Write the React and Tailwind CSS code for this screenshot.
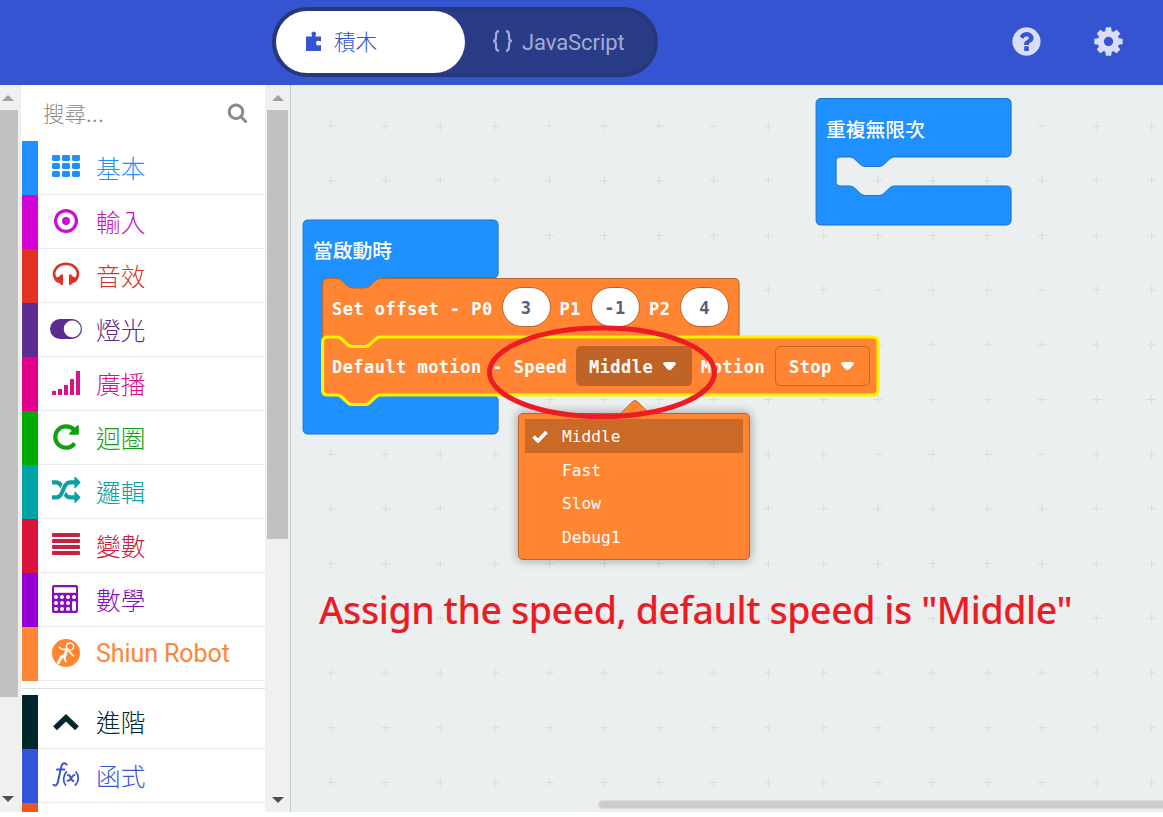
import React from "react";

const FA = {
  help: "M1024 1376v-192q0-14-9-23t-23-9h-192q-14 0-23 9t-9 23v192q0 14 9 23t23 9h192q14 0 23-9t9-23zm256-672q0-88-55.5-163t-138.5-116-170-41q-243 0-371 213-15 24 8 42l132 100q7 6 19 6 16 0 25-12 53-68 86-92 34-24 86-24 48 0 85.5 26t37.5 59q0 38-20 61t-68 45q-63 28-115.5 86.5t-52.5 125.5v36q0 14 9 23t23 9h192q14 0 23-9t9-23q0-19 21.5-49.5t54.5-49.5q32-18 49-28.5t46-35 44.5-48 28-60.5 12.5-81zm384 192q0 209-103 385.5t-279.5 279.5-385.5 103-385.5-103-279.5-279.5-103-385.5 103-385.5 279.5-279.5 385.5-103 385.5 103 279.5 279.5 103 385.5z",
  cog: "M1152 896q0-106-75-181t-181-75-181 75-75 181 75 181 181 75 181-75 75-181zm512-109v222q0 12-8 23t-20 13l-185 28q-19 54-39 91 35 50 107 138 10 12 10 25t-9 23q-27 37-99 108t-94 71q-12 0-26-9l-138-108q-44 23-91 38-16 136-29 186-7 28-36 28h-222q-14 0-24.5-8.5t-11.5-21.5l-28-184q-49-16-90-37l-141 107q-10 9-25 9-14 0-25-11-126-114-165-168-7-10-7-23 0-12 8-23 15-21 51-66.5t54-70.5q-27-50-41-99l-183-27q-13-2-21-12.5t-8-23.5v-222q0-12 8-23t19-13l186-28q14-46 39-92-40-57-107-138-10-12-10-24 0-10 9-23 26-36 98.5-107.5t94.5-71.5q13 0 26 10l138 107q44-23 91-38 16-136 29-186 7-28 36-28h222q14 0 24.5 8.5t11.5 21.5l28 184q49 16 90 37l142-107q9-9 24-9 13 0 25 10 129 119 165 170 7 8 7 22 0 12-8 23-15 21-51 66.5t-54 70.5q26 50 41 98l183 28q13 2 21 12.5t8 23.5z",
  search: "M1216 832q0-185-131.5-316.5t-316.5-131.5-316.5 131.5-131.5 316.5 131.5 316.5 316.5 131.5 316.5-131.5 131.5-316.5zm512 832q0 52-38 90t-90 38q-54 0-90-38l-343-342q-179 124-399 124-143 0-273.5-55.5t-225-150-150-225-55.5-273.5 55.5-273.5 150-225 225-150 273.5-55.5 273.5 55.5 225 150 150 225 55.5 273.5q0 220-124 399l343 343q37 37 37 90z",
  repeat: "M1664 256v448q0 26-19 45t-45 19h-448q-42 0-59-40-17-39 14-69l138-138q-148-137-349-137-104 0-198.5 40.5t-163.5 109.5-109.5 163.5-40.5 198.5 40.5 198.5 109.5 163.5 163.5 109.5 198.5 40.5q119 0 225-52t179-147q7-10 23-12 15 0 25 9l137 138q9 8 9.5 20.5t-7.5 22.5q-109 132-264 204.5t-327 72.5q-156 0-298-61t-245-164-164-245-61-298 61-298 164-245 245-164 298-61q147 0 284.5 55.5t244.5 156.5l130-129q29-31 70-14 39 17 39 59z",
  random: "M666 481q-60 92-137 273-22-45-37-72.5t-40.5-63.5-51-56.5-63-35-81.5-14.5h-224q-14 0-23-9t-9-23v-192q0-14 9-23t23-9h224q250 0 410 225zm1126 799q0 14-9 23l-320 320q-9 9-23 9-13 0-22.5-9.5t-9.5-22.5v-192q-32 0-85 .5t-81 1-73-1-71-5-64-10.500-63-18.500-58-28.500-59-40-55-53.500-56-69.500q59-93 136-273 22 45 37 72.5t40.5 63.5 51 56.5 63 35 81.5 14.5h256v-192q0-14 9-23t23-9q12 0 24 10l319 319q9 9 9 23zm0-896q0 14-9 23l-320 320q-9 9-23 9-13 0-22.5-9.5t-9.5-22.5v-192h-256q-48 0-87 15t-69 45-51 61.5-45 77.5q-32 62-78 171-29 66-49.5 111t-54 105-64 100-74 83-90 68.5-106.5 42-128 16.5h-224q-14 0-23-9t-9-23v-192q0-14 9-23t23-9h224q48 0 87-15t69-45 51-61.5 45-77.5q32-62 78-171 29-66 49.5-111t54-105 64-100 74-83 90-68.5 106.5-42 128-16.5h256v-192q0-14 9-23t23-9q12 0 24 10l319 319q9 9 9 23z",
};

function Glyph({ d, className }) {
  return (
    <svg viewBox="0 0 1792 1792" className={className} fill="currentColor">
      <path d={d} />
    </svg>
  );
}

function Box({ children }) {
  return (
    <svg viewBox="0 0 32 32" className="mt-[2px] h-8 w-8 shrink-0" fill="currentColor">
      {children}
    </svg>
  );
}

const icons = {
  grid: (
    <Box>
      {[2, 10, 18].map((y) =>
        [2, 12, 22].map((x) => <rect key={x + "-" + y} x={x} y={y} width="8" height="6" rx="1.4" />)
      )}
    </Box>
  ),
  target: (
    <Box>
      <circle cx="16" cy="14" r="10.400" fill="none" stroke="currentColor" strokeWidth="3.200" />
      <circle cx="16" cy="14" r="4" />
    </Box>
  ),
  headphones: (
    <Box>
      <path d="M7.500 19.500C0 13 6 2.800 16 2.800S32 13 24.500 19.500" fill="none" stroke="currentColor" strokeWidth="2.700" />
      <path d="M13 13.500V24H10.800L10.300 22.500C7 22 4.500 20 4.200 17.500C6 16.500 9 16.300 10.300 14.500L10.800 13.500ZM19 13.500V24H21.200L21.700 22.500C25 22 27.500 20 27.800 17.500C26 16.500 23 16.300 21.700 14.500L21.200 13.500Z" />
    </Box>
  ),
  toggle: (
    <Box>
      <path fillRule="evenodd" d="M10 4h12a10 10 0 0 1 0 20H10A10 10 0 0 1 10 4ZM22.300 5.500a8.500 8.500 0 1 0 0 17a8.500 8.500 0 1 0 0-17Z" />
    </Box>
  ),
  signal: (
    <Box>
      <path d="M2 22h4v4H2zM8 20h4v6H8zM14 16h4v10h-4zM20 10h4v16h-4zM26 2h4v24h-4z" />
    </Box>
  ),
  repeat: (
    <Box>
      <path transform="translate(1 -1) scale(.01674)" d={FA.repeat} />
    </Box>
  ),
  random: (
    <Box>
      <path transform="translate(2 -1) scale(.0159 .0167)" d={FA.random} />
    </Box>
  ),
  lines: (
    <Box>
      {[2, 8, 14, 20].map((y) => (
        <rect key={y} x="2" y={y} width="28" height="4" rx="1" />
      ))}
    </Box>
  ),
  calc: (
    <Box>
      <rect x="2" y="0" width="26" height="28" rx="2" />
      <rect x="4" y="2.300" width="22" height="5.500" fill="white" />
      {[12, 18, 24].map((y) =>
        [6, 12, 18, 24].map((x) =>
          x === 24 && y > 12 ? null : <circle key={x + "-" + y} cx={x} cy={y} r="2" fill="white" />
        )
      )}
      <rect x="22" y="16" width="4" height="10" rx="1.800" fill="white" />
    </Box>
  ),
  robot: (
    <Box>
      <circle cx="16" cy="14" r="14" />
      <g fill="none" stroke="white" strokeLinecap="round">
        <circle cx="20" cy="7.500" r="3.600" strokeWidth="1.500" />
        <path d="M17 10L15 16L11.500 18L8.500 23.500" strokeWidth="3" />
        <path d="M15.500 16L14.500 20L16 22.500" strokeWidth="1.700" />
        <path d="M15.500 10.500L11.500 10L9.500 8.500" strokeWidth="1.700" />
        <path d="M19 12L22 15.500L23.500 17" strokeWidth="1.700" />
      </g>
    </Box>
  ),
  up: (
    <Box>
      <path d="M5 21.200L16 10.800L27 21.200" fill="none" stroke="currentColor" strokeWidth="5.400" strokeLinejoin="miter" />
    </Box>
  ),
  fx: (
    <Box>
      <g fill="none" stroke="currentColor" strokeLinecap="round">
        <path d="M16.500 3.500C14 1.300 12 2.200 11.200 6L8 20.500C7.200 24.300 5.500 25.300 3.500 23.700M7 8.500H14.500" strokeWidth="2" />
        <path d="M16.500 11C12.800 14.500 12.800 20.500 15.500 24M26 11C29.300 14.500 29 20.500 25.500 24" strokeWidth="1.800" />
        <path d="M18 14.300C20.500 12.500 20.500 20.500 23.500 20M24.500 14C22.500 13.300 20.500 20.800 17.500 19.800" strokeWidth="2" />
      </g>
    </Box>
  ),
};

const CJK = "font-['Roboto','Noto_Sans_CJK_TC',sans-serif]";

function Category({ stripe, color, icon, label, latin }) {
  return (
    <div className="flex h-[54px] shrink-0">
      <div className={"w-4 shrink-0 " + stripe} />
      <div className={"flex flex-1 items-center border-b border-[#ececec] pl-3 " + color}>
        {icons[icon]}
        <span className={latin ? "ml-[14px] mt-[1px] text-[25px] tracking-[-0.080px]" : "ml-[14px] mt-[4px] text-[24.700px] font-light"}>{label}</span>
      </div>
    </div>
  );
}

function Triangle({ up }) {
  return (
    <svg viewBox="0 0 12 6" className={up ? "h-[6px] w-[12px] text-[#a0a0a0]" : "h-[6px] w-[12px] text-[#505050]"} fill="currentColor">
      <path d={up ? "M0 6L6 0L12 6Z" : "M0 0L6 6L12 0Z"} />
    </svg>
  );
}

function Caret() {
  return (
    <svg viewBox="0 0 13 9" className="h-[9px] w-[13px] shrink-0" fill="white">
      <path d="M2 0H11Q14 .4 12.300 2.800L8.500 7.300Q6.500 9.200 4.500 7.300L.7 2.800Q-1 .4 2 0Z" />
    </svg>
  );
}

function Value({ children }) {
  return (
    <div className="flex h-[40px] w-[49px] shrink-0 items-center justify-center rounded-[20px] border border-[#b9642c] bg-white pt-[4px] text-[#575e75]">
      {children}
    </div>
  );
}

const MONO = "font-['DejaVu_Sans_Mono','Noto_Sans_CJK_TC',monospace]";

function Workspace() {
  return (
    <main className="relative min-w-0 flex-1 overflow-hidden bg-[#ebeff0]">
      <svg viewBox="291 85 872 727" className="absolute inset-0 h-[727px] w-[872px]">
        <defs>
          <pattern id="grid" x="303.600" y="98.650" width="54.700" height="54.700" patternUnits="userSpaceOnUse">
            <path d="M23 27.350H31.700M27.350 23V31.700" stroke="#d9dddf" strokeWidth="1" />
          </pattern>
        </defs>
        <rect x="291" y="85" width="872" height="727" fill="url(#grid)" />
        <g transform="translate(-0.400 0)">
          <g fill="#1e90ff" stroke="#1873cc" strokeWidth="1">
            <path d="M821.500 98.500H1006.500Q1011.500 98.500 1011.500 103.500V152Q1011.500 157 1006.500 157H895Q892 157 890 159L884 164.700Q882 166.500 879 166.500H866Q863 166.500 861 164.700L855 159Q853 157 850 157H841Q836.500 157 836.500 161.500V181.500Q836.500 186 841 186H850Q853 186 855 188L861 193.700Q863 195.500 866 195.500H879Q882 195.500 884 193.700L890 188Q892 186 895 186H1006.500Q1011.500 186 1011.500 191V220Q1011.500 225 1006.500 225H821.500Q816.500 225 816.500 220V103.500Q816.500 98.500 821.500 98.500Z" />
            <path d="M308.500 220H493.500Q498.500 220 498.500 225V273Q498.500 278 493.500 278H323V396H493.500Q498.500 396 498.500 401V429Q498.500 434 493.500 434H308.500Q303.500 434 303.500 429V225Q303.500 220 308.500 220Z" />
            <path d="M320 275H390V289H320ZM320 392H390V410H320Z" stroke="none" />
          </g>
          <path d="M328 278.500H337Q340 278.500 342 280.500L348 286.200Q350 288 353 288H365Q368 288 370 286.200L376 280.500Q378 278.500 381 278.500H734.500Q739.500 278.500 739.500 283.500V337H381L368 347H352L340 337H323V283.500Q323 278.500 328 278.500Z" fill="#ff8533" stroke="#b9642c" />
          <path d="M328 337H337Q340 337 342 339L348 344.700Q350 346.500 353 346.500H365Q368 346.500 370 344.700L376 339Q378 337 381 337H873.500Q878.500 337 878.500 342V390Q878.500 395 873.500 395H381Q378 395 376 397L370 402.700Q368 404.500 365 404.500H353Q350 404.500 348 402.700L342 397Q340 395 337 395H328Q323 395 323 390V342Q323 337 328 337Z" fill="#ff8533" stroke="#fff200" strokeWidth="3.200" />
        </g>
      </svg>

      <div className="absolute left-[535px] top-[30px] whitespace-nowrap font-['Noto_Sans_CJK_TC',sans-serif] text-[19.800px] font-medium leading-[28px] text-white">重複無限次</div>
      <div className="absolute left-[22px] top-[151px] whitespace-nowrap font-['Noto_Sans_CJK_TC',sans-serif] text-[19.800px] font-medium leading-[28px] text-white">當啟動時</div>

      <div className={"absolute left-[41px] top-[202px] flex h-[40px] items-center whitespace-nowrap text-[17px] font-bold tracking-[0.480px] text-white " + MONO}>
        <span className="w-[169.500px] pt-[5px]">Set offset - P0</span>
        <Value>3</Value>
        <span className="ml-[9px] w-[31px] pt-[5px]">P1</span>
        <Value>-1</Value>
        <span className="ml-[9.500px] w-[31px] pt-[5px]">P2</span>
        <Value>4</Value>
      </div>

      <div className={"absolute left-[41px] top-[261px] flex h-[40px] items-center whitespace-nowrap text-[17px] font-bold tracking-[0.450px] text-white " + MONO}>
        <span className="w-[244px] pt-[4px]">Default motion - Speed</span>
        <div className="flex h-[40px] w-[116px] shrink-0 items-center gap-[10px] rounded-[5px] bg-[#bf6326] pl-[13px]">
          <span className="pt-[4px]">Middle</span>
          <Caret />
        </div>
        <span className="ml-[9px] w-[74px] pt-[4px]">Motion</span>
        <div className="flex h-[40px] w-[95px] shrink-0 items-center gap-[9px] rounded-[5px] border border-[#c4672a] pl-[13px]">
          <span className="pt-[4px]">Stop</span>
          <Caret />
        </div>
      </div>

      <div className={"absolute left-[227px] top-[328px] h-[147px] w-[232px] rounded-[5px] border border-[#b9642c] bg-[#ff8533] px-[6px] pt-[5px] text-[16.200px] text-white shadow-[0_0_8px_2px_rgba(0,0,0,0.25)] " + MONO}>
        <svg viewBox="0 0 32 15" className="absolute left-[100px] top-[-15px] h-[15px] w-[32px]">
          <path d="M1.500 15L13.500 2.800Q16 .2 18.500 2.800L30.500 15Z" fill="#ff8533" />
          <path d="M1.500 14.500L13.500 2.800Q16 .2 18.500 2.800L30.500 14.500" fill="none" stroke="#b9642c" />
        </svg>
        <div className="flex h-[34px] items-center bg-[#cb6927]">
          <svg viewBox="0 0 16 13" className="ml-[7px] mr-[14px] h-[13px] w-[16px]">
            <path d="M1.500 6.500L6 11L14.500 2" fill="none" stroke="white" strokeWidth="3.600" />
          </svg>
          <span className="pt-[2px]">Middle</span>
        </div>
        <div className="flex h-[33.600px] items-center pl-[37px] pt-[2px]">Fast</div>
        <div className="flex h-[33.600px] items-center pl-[37px] pt-[2px]">Slow</div>
        <div className="flex h-[33.600px] items-center pl-[37px] pt-[2px]">Debug1</div>
      </div>

      <svg viewBox="291 85 872 727" className="absolute inset-0 h-[727px] w-[872px]">
        <ellipse cx="602" cy="372.300" rx="112.500" ry="44.300" fill="none" stroke="#ed1c24" strokeWidth="5" />
      </svg>
      <div className="absolute left-[28px] top-[498px] whitespace-nowrap font-['Noto_Sans',sans-serif] text-[37.500px] font-medium leading-[54px] tracking-[-0.440px] text-[#ed1c24]">Assign the speed, default speed is "Middle"</div>
      <div className="absolute left-[307px] top-[715px] h-[9px] w-[570px] rounded-[5px] border border-[#dcdcdc] bg-[#cdcdcd]" />
    </main>
  );
}

export default function App() {
  return (
    <div className={"flex h-[817px] w-[1163px] flex-col overflow-hidden bg-white " + CJK}>
      <header className="flex h-[85px] shrink-0 items-start bg-[#3454d1] pl-[272px] pt-[7px]">
        <div className="flex h-[70px] w-[386px] shrink-0 rounded-full border-4 border-[#263878] bg-[#2a3c87]">
          <div className="flex h-[62px] w-[189px] items-center rounded-full bg-white pl-[30px] text-[#3454d1]">
            <svg viewBox="0 0 16 20" className="mt-[-2px] h-[20px] w-[16px]" fill="currentColor">
              <path d="M0 5.500H5.500Q6.300 5.300 6 4.300A2.300 2.300 0 1 1 9.500 4.300Q9.200 5.300 10 5.500H15V10.200Q14.500 10.600 13.500 10A2.400 2.400 0 1 0 13.500 14.300Q14.500 13.700 15 14V20H0Z" />
            </svg>
            <span className="ml-[12px] mt-[3px] text-[21.600px] font-light">積木</span>
          </div>
          <div className="flex items-center pl-[27px] text-[#a2abd6]">
            <svg viewBox="0 0 21 22" className="mt-[-3px] h-[22px] w-[21px]" fill="none" stroke="currentColor" strokeWidth="2.200">
              <path d="M7 1.200Q4 1.200 4 5V7.500Q4 11 1 11Q4 11 4 14.500V17Q4 20.800 7 20.800M14 1.200Q17 1.200 17 5V7.500Q17 11 20 11Q17 11 17 14.500V17Q17 20.800 14 20.800" />
            </svg>
            <span className="ml-[9px] mt-[1px] text-[22px] tracking-[-0.080px]">JavaScript</span>
          </div>
        </div>
        <div className="ml-auto flex items-center gap-[49px] pr-[38.500px] pt-[18px] text-[#d9def6]">
          <Glyph d={FA.help} className="h-[33px] w-[33px]" />
          <Glyph d={FA.cog} className="h-[33px] w-[33px]" />
        </div>
      </header>

      <div className="flex h-[727px] shrink-0">
        <div className="flex w-[21px] shrink-0 flex-col bg-[#f0f0f0]">
          <div className="flex h-[25px] items-center pl-[1.500px]"><Triangle up /></div>
          <div className="h-[587px] w-[18px] bg-[#c1c1c1]" />
          <div className="mt-auto flex h-[25px] items-center pb-[2px] pl-[1.500px]"><Triangle /></div>
        </div>

        <aside className="flex w-[244px] shrink-0 flex-col overflow-hidden bg-white pl-px">
          <div className="flex h-[56px] shrink-0 items-center pl-[21px] pr-[17px] text-[#8a8a8a]">
            <span className="mt-[4px] text-[21.500px] font-light">搜尋<span className="font-normal tracking-[0.400px]">...</span></span>
            <Glyph d={FA.search} className="-mt-[1px] ml-auto h-[21px] w-[21px]" />
          </div>
          <Category stripe="bg-[#1e90ff]" color="text-[#1e90ff]" icon="grid" label="基本" />
          <Category stripe="bg-[#d400d4]" color="text-[#c911c9]" icon="target" label="輸入" />
          <Category stripe="bg-[#e63022]" color="text-[#dc3328]" icon="headphones" label="音效" />
          <Category stripe="bg-[#5c2d91]" color="text-[#5c2d91]" icon="toggle" label="燈光" />
          <Category stripe="bg-[#e3008c]" color="text-[#d9128c]" icon="signal" label="廣播" />
          <Category stripe="bg-[#00aa00]" color="text-[#10a010]" icon="repeat" label="迴圈" />
          <Category stripe="bg-[#00a4a6]" color="text-[#109ea0]" icon="random" label="邏輯" />
          <Category stripe="bg-[#dc143c]" color="text-[#c8203f]" icon="lines" label="變數" />
          <Category stripe="bg-[#9400d3]" color="text-[#8510b8]" icon="calc" label="數學" />
          <Category stripe="bg-[#ff8533]" color="text-[#ff8533]" icon="robot" label="Shiun Robot" latin />
          <div className="mb-[6px] mt-[7px] h-px shrink-0 bg-[#dedede]" />
          <Category stripe="bg-[#00272b]" color="text-[#00272b]" icon="up" label="進階" />
          <Category stripe="bg-[#3454db]" color="text-[#3a57cd]" icon="fx" label="函式" />
          <div className="h-[9px] w-4 shrink-0 bg-[#e65722]" />
        </aside>

        <div className="flex w-[26px] shrink-0 flex-col border-r border-[#c3c7c9] bg-[#f0f0f0] pl-[2px]">
          <div className="flex h-[25px] items-center pl-[4.500px]"><Triangle up /></div>
          <div className="h-[429px] w-[21px] bg-[#c1c1c1]" />
          <div className="mt-auto flex h-[25px] items-center pl-[4.500px]"><Triangle /></div>
        </div>

        <Workspace />
      </div>
    </div>
  );
}
